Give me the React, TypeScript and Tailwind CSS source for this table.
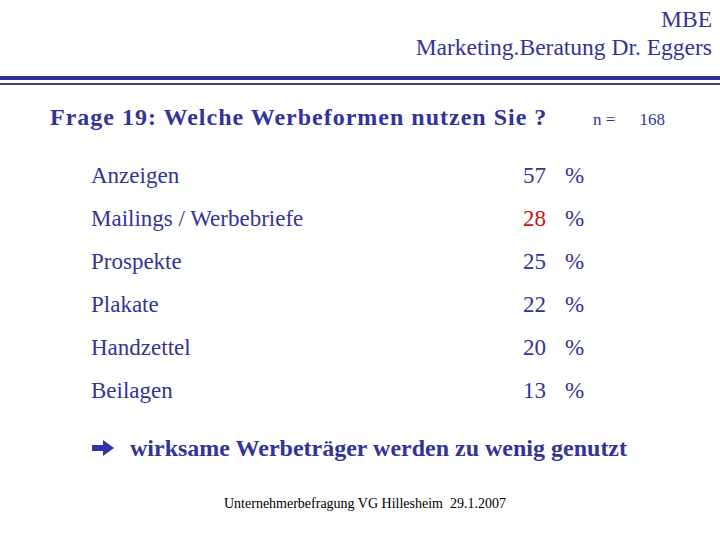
const rows = [
  { label: "Anzeigen", value: "57" },
  { label: "Mailings / Werbebriefe", value: "28", red: true },
  { label: "Prospekte", value: "25" },
  { label: "Plakate", value: "22" },
  { label: "Handzettel", value: "20" },
  { label: "Beilagen", value: "13" },
];

export default function App() {
  return (
    <div className="w-[720px] h-[540px] bg-white text-[#333399] overflow-hidden font-['Liberation_Serif',serif]">
      {/* Header */}
      <div className="pt-[5px] pr-[8px] text-right text-[23.5px] leading-[28px]">
        <div>MBE</div>
        <div>Marketing.Beratung Dr. Eggers</div>
      </div>

      {/* Double rule */}
      <div className="mt-[15px] h-[4px] bg-[#2e2e9e]" />
      <div className="mt-[3px] h-[2px] bg-[#3f3f7c]" />

      {/* Question */}
      <div className="mt-[18px] pl-[50px] flex items-baseline">
        <h1 className="w-[543px] text-[24px] font-bold leading-[28px] tracking-[1px]">
          Frage 19: Welche Werbeformen nutzen Sie ?
        </h1>
        <span className="text-[17px]">
          n = <span className="ml-[20px]">168</span>
        </span>
      </div>

      {/* Rows */}
      <ul className="mt-[29px] pl-[91px]">
        {rows.map((r) => (
          <li key={r.label} className="flex items-baseline h-[43px] text-[23px] leading-[28px]">
            <span className="w-[431px]">{r.label}</span>
            <span className={r.red ? "w-[24px] text-right text-[#cc1111]" : "w-[24px] text-right"}>
              {r.value}
            </span>
            <span className="ml-[19px]">%</span>
          </li>
        ))}
      </ul>

      {/* Conclusion */}
      <div className="mt-[14px] pl-[92px] flex items-center">
        <svg width="22" height="16" viewBox="0 0 22 16" className="mr-[16px]">
          <path d="M0 5 H11 V0 L22 8 L11 16 V11 H0 Z" fill="#3333aa" />
        </svg>
        <span className="text-[24px] font-bold leading-[28px]">
          wirksame Werbeträger werden zu wenig genutzt
        </span>
      </div>

      {/* Footer */}
      <div className="mt-[31px] pl-[224px] text-[14px] text-black">
        Unternehmerbefragung VG Hillesheim&nbsp; 29.1.2007
      </div>
    </div>
  );
}
